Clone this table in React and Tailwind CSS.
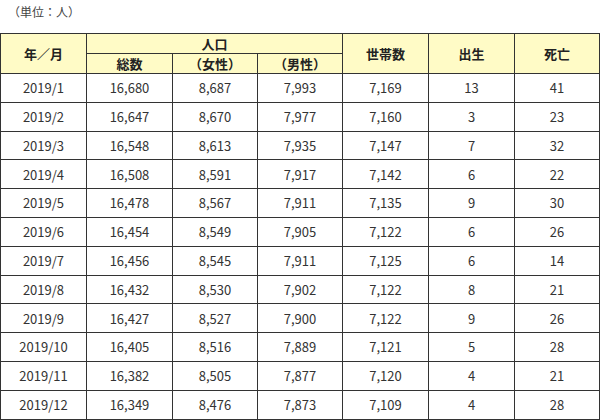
import React from 'react';

const rows = [
  ['2019/1', '16,680', '8,687', '7,993', '7,169', '13', '41'],
  ['2019/2', '16,647', '8,670', '7,977', '7,160', '3', '23'],
  ['2019/3', '16,548', '8,613', '7,935', '7,147', '7', '32'],
  ['2019/4', '16,508', '8,591', '7,917', '7,142', '6', '22'],
  ['2019/5', '16,478', '8,567', '7,911', '7,135', '9', '30'],
  ['2019/6', '16,454', '8,549', '7,905', '7,122', '6', '26'],
  ['2019/7', '16,456', '8,545', '7,911', '7,125', '6', '14'],
  ['2019/8', '16,432', '8,530', '7,902', '7,122', '8', '21'],
  ['2019/9', '16,427', '8,527', '7,900', '7,122', '9', '26'],
  ['2019/10', '16,405', '8,516', '7,889', '7,121', '5', '28'],
  ['2019/11', '16,382', '8,505', '7,877', '7,120', '4', '21'],
  ['2019/12', '16,349', '8,476', '7,873', '7,109', '4', '28'],
];

const th = 'border border-[#333] bg-[#fffbc6] font-bold text-[13px] text-[#222] p-0';
const td = 'border border-[#333] text-[13px] text-[#333] p-0 text-center';

export default function App() {
  return (
    <div className="w-[600px] h-[420px] bg-white overflow-hidden font-['Noto_Sans_CJK_JP','Noto_Sans',sans-serif]">
      <div className="h-[33px] pl-[8px] pt-[3px] text-[12px] text-[#444]">（単位：人）</div>
      <table className="border-collapse table-fixed w-[599px] border-[1.5px] border-[#222]">
        <colgroup>
          <col className="w-[86px]" />
          <col className="w-[86px]" />
          <col className="w-[85px]" />
          <col className="w-[85px]" />
          <col className="w-[86px]" />
          <col className="w-[86px]" />
          <col className="w-[85px]" />
        </colgroup>
        <thead>
          <tr className="h-[20px]">
            <th rowSpan={2} className={th}>年／月</th>
            <th colSpan={3} className={th + ' leading-[18px]'}>人口</th>
            <th rowSpan={2} className={th}>世帯数</th>
            <th rowSpan={2} className={th}>出生</th>
            <th rowSpan={2} className={th}>死亡</th>
          </tr>
          <tr className="h-[20px]">
            <th className={th + ' leading-[18px]'}>総数</th>
            <th className={th + ' leading-[18px]'}>（女性）</th>
            <th className={th + ' leading-[18px]'}>（男性）</th>
          </tr>
        </thead>
        <tbody>
          {rows.map((r) => (
            <tr key={r[0]} className="h-[28.8px]">
              {r.map((c, i) => (
                <td key={i} className={td}>{c}</td>
              ))}
            </tr>
          ))}
        </tbody>
      </table>
    </div>
  );
}
